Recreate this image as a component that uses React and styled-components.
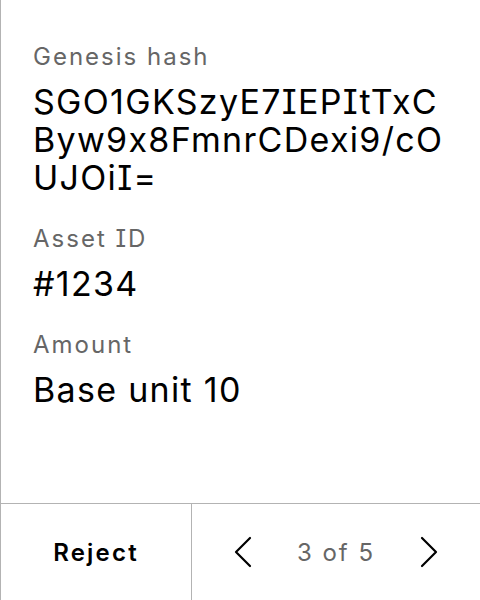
import React from 'react';
import styled, { createGlobalStyle } from 'styled-components';

const GlobalStyle = createGlobalStyle`
body{
  margin:0;
  background:#ffffff;
  font-family:Inter, "Noto Sans", sans-serif;
  font-feature-settings:"cv08" 1, "calt" 0;
}
`;

const Screen = styled.div`
height:600px;
display:flex;
flex-direction:column;
border-left:1px solid #b3b3b3;
box-sizing:border-box;
`;
const Details = styled.div`
flex:1;
padding:42px 30px 0 32px;
display:flex;
flex-direction:column;
gap:27px;
`;
const Field = styled.div`
display:flex;
flex-direction:column;
gap:11px;
`;
const Label = styled.div`
font-size:24px;
line-height:30px;
letter-spacing:2px;
color:#666666;
`;
const Value = styled.div`
font-size:34px;
line-height:38px;
letter-spacing:1.3px;
color:#000000;
word-break:${p => (p.$breakAll ? 'break-all' : 'normal')};
`;
const Footer = styled.div`
height:96px;
display:grid;
grid-template-columns:191px 1fr;
border-top:1px solid #b3b3b3;
`;
const RejectButton = styled.button`
border:none;
border-right:1px solid #b3b3b3;
background:none;
font-family:inherit;
font-feature-settings:inherit;
font-size:24px;
font-weight:600;
letter-spacing:2.2px;
color:#000000;
padding:0;
cursor:pointer;
`;
const Pager = styled.div`
display:flex;
align-items:center;
justify-content:center;
gap:44px;
`;
const ArrowButton = styled.button`
border:none;
background:none;
padding:0;
display:flex;
cursor:pointer;
`;
const PageText = styled.span`
font-size:24px;
letter-spacing:2px;
color:#666666;
`;

const Chevron = ({ dir }) => (
  <svg width="20" height="32" viewBox="0 0 20 32" fill="none" stroke="#000" strokeWidth="2.2" strokeLinecap="round" strokeLinejoin="round">
    {dir === 'left' ? <polyline points="17,2 3,16 17,30" /> : <polyline points="3,2 17,16 3,30" />}
  </svg>
);

const fields = [
  { label: 'Genesis hash', value: 'SGO1GKSzyE7IEPItTxCByw9x8FmnrCDexi9/cOUJOiI=', breakAll: true },
  { label: 'Asset ID', value: '#1234' },
  { label: 'Amount', value: 'Base unit 10' },
];

const App = () => {
  return (
    <Screen>
      <GlobalStyle />
      <Details>
        {fields.map(f => (
          <Field key={f.label}>
            <Label>{f.label}</Label>
            <Value $breakAll={f.breakAll}>{f.value}</Value>
          </Field>
        ))}
      </Details>
      <Footer>
        <RejectButton>Reject</RejectButton>
        <Pager>
          <ArrowButton aria-label="previous"><Chevron dir="left" /></ArrowButton>
          <PageText>3 of 5</PageText>
          <ArrowButton aria-label="next"><Chevron dir="right" /></ArrowButton>
        </Pager>
      </Footer>
    </Screen>
  );
};

export default App;
